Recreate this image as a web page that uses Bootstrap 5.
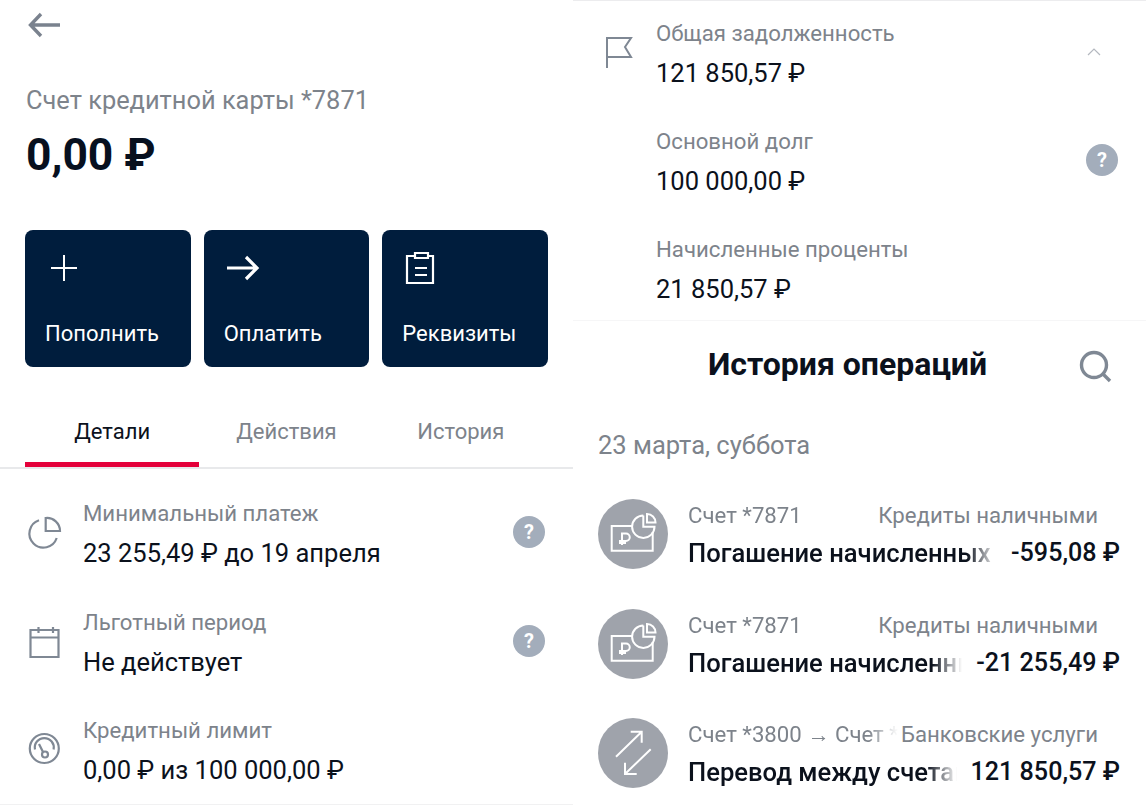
<!DOCTYPE html>
<html lang="en">
<head>
    <meta charset="UTF-8">
    <meta name="viewport" content="width=device-width, initial-scale=1.0">
    <title>Счет кредитной карты</title>
    <link rel="stylesheet" href="https://cdn.jsdelivr.net/npm/bootstrap@5.3.0/dist/css/bootstrap.min.css">
    <style>
        html, body { height: 805px; overflow: hidden; }
        body { font-family: Roboto, "Liberation Sans", sans-serif; color: #0b111c; background: #fff; }
        svg { overflow: visible; }
        .screen { height: 805px; overflow: hidden; }
        .back-bar { height: 50px; padding: 12px 0 0 27px; }
        .acc-title { margin: 35px 0 0 26px; font-size: 25.4px; line-height: 30px; color: #7d838b; }
        .acc-sum { margin: 13px 0 0 26px; font-size: 44.4px; line-height: 54px; font-weight: 700; color: #07101f; }
        .act-row { margin: 48px 25px 0 25px; gap: 13px; }
        .act-btn { flex: 1 1 0; height: 137px; padding: 19px 20px 18px; background: #001d3d; color: #fff; border-radius: 8px; font-size: 22px; line-height: 30px; text-align: left; border: 0; }
        .act-btn span { display: block; }
        .tabs-bar { margin-top: 38px; padding: 0 25px; height: 64px; border-bottom: 2px solid #e8e9eb; }
        .tab-item { flex: 1 1 0; height: 62px; line-height: 54px; text-align: center; font-size: 22px; color: #7d838b; }
        .tab-item.on { color: #0b111c; border-bottom: 5px solid #e4003a; }
        .info-row { height: 108.5px; padding-top: 29px; }
        .info-ico { width: 83px; flex: none; }
        .info-ico svg { display: block; margin: 19px 0 0 28px; }
        .info-label { font-size: 22.2px; line-height: 30px; color: #7d838b; }
        .info-val { font-size: 25.5px; line-height: 34px; margin-top: 8px; }
        .help-dot { width: 32px; height: 32px; margin: 18px 28px 0 0; border-radius: 50%; background: #a3adbb; color: #fff; font-size: 20px; line-height: 32px; font-weight: 700; text-align: center; flex: none; }
        .bottom-line { border-top: 1px solid #f1f1f2; margin-top: 9px; }
        .debt-top { border-top: 1px solid #ececee; }
        .debt-row { height: 108px; padding-top: 17px; }
        .chev-ico { margin: 29px 45px 0 0; flex: none; }
        .hist-head { margin-top: -5px; height: 92px; padding: 0 34px 0 25px; border-top: 1px solid #f6f6f7; }
        .hist-title { font-size: 32px; line-height: 86px; margin-bottom: 6px; font-weight: 700; padding-left: 18px; flex: 1 1 auto; text-align: center; }
        .hist-date { margin: 18px 0 0 25px; font-size: 25.5px; line-height: 30px; color: #7d838b; }
        .op-row { height: 109.5px; padding: 0 26px 0 25px; gap: 20px; }
        .op-list { margin-top: 39px; }
        .op-pic { width: 70px; height: 70px; border-radius: 50%; background: #9fa3ab; flex: none; }
        .op-text { min-width: 0; flex: 1 1 auto; margin-top: 1px; }
        .op-line { gap: 3px; white-space: nowrap; }
        .op-top { font-size: 22.2px; line-height: 30px; color: #7d838b; padding-right: 22px; }
        .op-bottom { font-size: 25.6px; line-height: 34px; margin-top: 6px; font-weight: 500; gap: 14px; }
        .op-bottom .op-fix { font-size: 25.1px; }
        .op-fade { flex: 1 1 auto; min-width: 0; overflow: hidden; -webkit-mask-image: linear-gradient(to right, #000 calc(100% - 30px), transparent); mask-image: linear-gradient(to right, #000 calc(100% - 30px), transparent); }
        .op-fix { flex: none; }
    </style>
</head>
<body>
    <div class="row g-0 screen">
        <div class="col-6">
            <div class="back-bar">
                <svg width="34" height="26" viewBox="0 0 34 26" fill="none" stroke="#7a828e" stroke-width="3.4"><path d="M33 13H4M14 2 3.5 13 14 24"/></svg>
            </div>
            <div class="acc-title">Счет кредитной карты *7871</div>
            <div class="acc-sum">0,00 ₽</div>
            <div class="d-flex act-row">
                <button class="act-btn d-flex flex-column justify-content-between">
                    <svg width="38" height="38" viewBox="0 0 38 38" fill="none" stroke="#fff" stroke-width="2"><path d="M6 19H32M19 6V32"/></svg>
                    <span>Пополнить</span>
                </button>
                <button class="act-btn d-flex flex-column justify-content-between">
                    <svg width="38" height="38" viewBox="0 0 38 38" fill="none" stroke="#fff" stroke-width="3.2"><path d="M3 19H32M22 8 33 19 22 30"/></svg>
                    <span>Оплатить</span>
                </button>
                <button class="act-btn d-flex flex-column justify-content-between">
                    <svg width="38" height="38" viewBox="0 0 38 38" fill="none" stroke="#fff" stroke-width="2.2"><path d="M13 7H5V34H31V7H26M13 4H26V9H13ZM13 19H25M13 26H25"/></svg>
                    <span>Реквизиты</span>
                </button>
            </div>
            <div class="d-flex tabs-bar">
                <div class="tab-item on">Детали</div>
                <div class="tab-item">Действия</div>
                <div class="tab-item">История</div>
            </div>
            <div class="d-flex info-row">
                <div class="info-ico">
                    <svg width="33" height="33" viewBox="0 0 33 33" fill="none" stroke="#7f8894" stroke-width="2.2"><path d="M11 3.3A14 14 0 1 0 28.7 21"/><path d="M17.7 1V14H32A13 13 0 0 0 17.7 1Z"/></svg>
                </div>
                <div class="flex-grow-1">
                    <div class="info-label">Минимальный платеж</div>
                    <div class="info-val">23 255,49 ₽ до 19 апреля</div>
                </div>
                <div class="help-dot">?</div>
            </div>
            <div class="d-flex info-row">
                <div class="info-ico">
                    <svg width="33" height="33" viewBox="0 0 33 33" fill="none" stroke="#7f8894" stroke-width="2.2"><path d="M2.5 4H30.5V31H2.5ZM2.5 11.5H30.5M10.5 1V7M25 1V7"/></svg>
                </div>
                <div class="flex-grow-1">
                    <div class="info-label">Льготный период</div>
                    <div class="info-val">Не действует</div>
                </div>
                <div class="help-dot">?</div>
            </div>
            <div class="d-flex info-row">
                <div class="info-ico">
                    <svg width="33" height="33" viewBox="0 0 33 33" fill="none" stroke="#7f8894" stroke-width="2.2"><circle cx="16.3" cy="14.5" r="14.5"/><path d="M7 15.5A9.5 9.5 0 1 1 25.6 15.5"/><path d="M11 10 15 18"/><circle cx="17" cy="20.5" r="3"/></svg>
                </div>
                <div class="flex-grow-1">
                    <div class="info-label">Кредитный лимит</div>
                    <div class="info-val">0,00 ₽ из 100 000,00 ₽</div>
                </div>
            </div>
            <div class="bottom-line"></div>
        </div>
        <div class="col-6">
            <div class="debt-top"></div>
            <div class="d-flex debt-row">
                <div class="info-ico">
                    <svg width="33" height="33" viewBox="0 0 33 33" fill="none" stroke="#7f8894" stroke-width="2"><path d="M6 31V1H30L24 10 30 20H6"/></svg>
                </div>
                <div class="flex-grow-1">
                    <div class="info-label">Общая задолженность</div>
                    <div class="info-val">121 850,57 ₽</div>
                </div>
                <svg class="chev-ico" width="14" height="10" viewBox="0 0 14 10" fill="none" stroke="#b4b8bf" stroke-width="1.2"><path d="M1 8 7 2 13 8"/></svg>
            </div>
            <div class="d-flex debt-row">
                <div class="info-ico"></div>
                <div class="flex-grow-1">
                    <div class="info-label">Основной долг</div>
                    <div class="info-val">100 000,00 ₽</div>
                </div>
                <div class="help-dot">?</div>
            </div>
            <div class="d-flex debt-row">
                <div class="info-ico"></div>
                <div class="flex-grow-1">
                    <div class="info-label">Начисленные проценты</div>
                    <div class="info-val">21 850,57 ₽</div>
                </div>
            </div>
            <div class="d-flex align-items-center hist-head">
                <div class="hist-title">История операций</div>
                <svg width="33" height="33" viewBox="0 0 33 33" fill="none" stroke="#7f8894" stroke-width="3.4"><circle cx="15" cy="15" r="12.5"/><path d="M24 24 31 31"/></svg>
            </div>
            <div class="hist-date">23 марта, суббота</div>
            <div class="op-list">
                <div class="d-flex op-row">
                    <div class="op-pic">
                        <svg width="70" height="70" viewBox="0 0 70 70" fill="none" stroke="#fff" stroke-width="2"><path d="M34.5 27H13.7V51.7H54.7V33"/><path d="M45.3 16.5V27.7H56.5A11.2 11.2 0 1 1 45.3 16.5"/><path d="M49 15V23.5H57.5A8.5 8.5 0 0 0 49 15Z"/><path d="M24 46V34.5H28A3.7 3.7 0 0 1 28 42H21M21 44H28"/></svg>
                    </div>
                    <div class="op-text">
                        <div class="d-flex op-line op-top"><div class="op-fade">Счет *7871</div><div class="op-fix">Кредиты наличными</div></div>
                        <div class="d-flex op-line op-bottom"><div class="op-fade">Погашение начисленных</div><div class="op-fix">-595,08 ₽</div></div>
                    </div>
                </div>
                <div class="d-flex op-row">
                    <div class="op-pic">
                        <svg width="70" height="70" viewBox="0 0 70 70" fill="none" stroke="#fff" stroke-width="2"><path d="M34.5 27H13.7V51.7H54.7V33"/><path d="M45.3 16.5V27.7H56.5A11.2 11.2 0 1 1 45.3 16.5"/><path d="M49 15V23.5H57.5A8.5 8.5 0 0 0 49 15Z"/><path d="M24 46V34.5H28A3.7 3.7 0 0 1 28 42H21M21 44H28"/></svg>
                    </div>
                    <div class="op-text">
                        <div class="d-flex op-line op-top"><div class="op-fade">Счет *7871</div><div class="op-fix">Кредиты наличными</div></div>
                        <div class="d-flex op-line op-bottom"><div class="op-fade">Погашение начисленных</div><div class="op-fix">-21 255,49 ₽</div></div>
                    </div>
                </div>
                <div class="d-flex op-row">
                    <div class="op-pic">
                        <svg width="70" height="70" viewBox="0 0 70 70" fill="none" stroke="#fff" stroke-width="2"><path d="M18 38.7 43.7 13.7M32.7 13.7H43.7V24.7M52.7 31.3 27 56M27 44.7V56H38.7"/></svg>
                    </div>
                    <div class="op-text">
                        <div class="d-flex op-line op-top"><div class="op-fade">Счет *3800 → Счет *7871</div><div class="op-fix">Банковские услуги</div></div>
                        <div class="d-flex op-line op-bottom"><div class="op-fade">Перевод между счетами</div><div class="op-fix">121 850,57 ₽</div></div>
                    </div>
                </div>
            </div>
        </div>
    </div>
    <script src="https://cdn.jsdelivr.net/npm/bootstrap@5.3.0/dist/js/bootstrap.bundle.min.js"></script>
</body>
</html>
